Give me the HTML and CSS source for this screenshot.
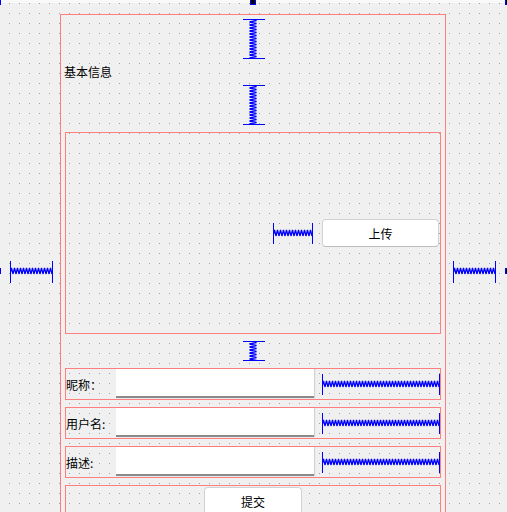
FILE: index.html
```html
<!DOCTYPE html>
<html lang="zh-CN">
<head>
<meta charset="utf-8">
<title>Form</title>
<link rel="stylesheet" href="styles.css">
</head>
<body>
<svg class="defs" width="0" height="0" aria-hidden="true">
  <defs>
    <pattern id="zv" width="22" height="3" patternUnits="userSpaceOnUse">
      <path d="M6.5 0 L13.5 1.5 L6.5 3" fill="none" stroke="#0000ff" stroke-width="1.3"/>
    </pattern>
    <pattern id="zh" width="3" height="22" patternUnits="userSpaceOnUse">
      <path d="M0 13 L1.5 7 L3 13" fill="none" stroke="#0000ff" stroke-width="1.3"/>
    </pattern>
  </defs>
</svg>
<div class="strip"></div>
<div class="root">
  <svg class="spring side" width="43" height="22" viewBox="0 0 43 22">
    <rect x="0" y="0" width="1" height="22" fill="#0000ff"/>
    <rect x="42" y="0" width="1" height="22" fill="#0000ff"/>
    <rect x="1" y="6" width="41" height="8" fill="url(#zh)"/>
  </svg>
  <div class="form">
    <svg class="vspring tall" width="22" height="40" viewBox="0 0 22 40">
      <rect x="0" y="0" width="22" height="1" fill="#0000ff"/>
      <rect x="0" y="39" width="22" height="1" fill="#0000ff"/>
      <rect x="0" y="1" width="22" height="38" fill="url(#zv)"/>
    </svg>
    <div class="title">基本信息</div>
    <svg class="vspring tall" width="22" height="40" viewBox="0 0 22 40">
      <rect x="0" y="0" width="22" height="1" fill="#0000ff"/>
      <rect x="0" y="39" width="22" height="1" fill="#0000ff"/>
      <rect x="0" y="1" width="22" height="38" fill="url(#zv)"/>
    </svg>
    <div class="box upload">
      <svg class="spring" width="40" height="21" viewBox="0 0 40 21">
        <rect x="0" y="0" width="1" height="21" fill="#0000ff"/>
        <rect x="39" y="0" width="1" height="21" fill="#0000ff"/>
        <rect x="1" y="6" width="38" height="8" fill="url(#zh)"/>
      </svg>
      <button class="btn upload-btn" type="button">上传</button>
    </div>
    <svg class="vspring short" width="22" height="20" viewBox="0 0 22 20">
      <rect x="0" y="0" width="22" height="1" fill="#0000ff"/>
      <rect x="0" y="19" width="22" height="1" fill="#0000ff"/>
      <rect x="0" y="1" width="22" height="18" fill="url(#zv)"/>
    </svg>
    <div class="box row">
      <span class="label">昵称：</span>
      <input class="field" type="text">
      <svg class="spring rowspring" width="118" height="21" viewBox="0 0 118 21">
        <rect x="0" y="0" width="1" height="21" fill="#0000ff"/>
        <rect x="117" y="0" width="1" height="21" fill="#0000ff"/>
        <rect x="1" y="6" width="116" height="8" fill="url(#zh)"/>
      </svg>
    </div>
    <div class="box row">
      <span class="label">用户名:</span>
      <input class="field" type="text">
      <svg class="spring rowspring" width="118" height="21" viewBox="0 0 118 21">
        <rect x="0" y="0" width="1" height="21" fill="#0000ff"/>
        <rect x="117" y="0" width="1" height="21" fill="#0000ff"/>
        <rect x="1" y="6" width="116" height="8" fill="url(#zh)"/>
      </svg>
    </div>
    <div class="box row">
      <span class="label">描述:</span>
      <input class="field" type="text">
      <svg class="spring rowspring" width="118" height="21" viewBox="0 0 118 21">
        <rect x="0" y="0" width="1" height="21" fill="#0000ff"/>
        <rect x="117" y="0" width="1" height="21" fill="#0000ff"/>
        <rect x="1" y="6" width="116" height="8" fill="url(#zh)"/>
      </svg>
    </div>
    <div class="box submit">
      <button class="btn submit-btn" type="button">提交</button>
    </div>
  </div>
  <svg class="spring side" width="43" height="22" viewBox="0 0 43 22">
    <rect x="0" y="0" width="1" height="22" fill="#0000ff"/>
    <rect x="42" y="0" width="1" height="22" fill="#0000ff"/>
    <rect x="1" y="6" width="41" height="8" fill="url(#zh)"/>
  </svg>
</div>
<div class="handle h-tl"></div>
<div class="handle h-tc"></div>
<div class="handle h-tr"></div>
<div class="handle h-ml"></div>
<div class="handle h-mr"></div>
</body>
</html>
```
FILE: styles.css
```css
html {
  margin: 0;
  background-color: #f0f0f0;
  background-image:
    linear-gradient(90deg, #f0f0f0 9px, transparent 9px),
    linear-gradient(180deg, transparent 9px, #a0a0a0 9px);
  background-size: 10px 10px;
  background-position: 0 4px;
}

body {
  margin: 0;
  height: 512px;
  overflow: hidden;
  position: relative;
  font-family: "Noto Sans CJK SC", "Noto Sans", sans-serif;
  font-size: 12px;
  color: #000;
}

.defs {
  display: block;
  width: 0;
  height: 0;
}

.strip {
  height: 3px;
  background: #f9f9f9;
}

.root {
  display: flex;
  align-items: center;
  gap: 7px;
  padding-left: 10px;
  height: 537px;
}

.spring {
  display: block;
  flex: none;
}

.form {
  flex: none;
  box-sizing: border-box;
  width: 386px;
  height: 515px;
  border: 1px solid #ff7f7f;
  padding: 4px 4px 0;
  display: flex;
  flex-direction: column;
}

.vspring {
  display: block;
  flex: none;
  align-self: center;
  margin-left: 2px;
}

.title {
  height: 26px;
  line-height: 26px;
  margin-left: -1px;
}

.box {
  flex: none;
  box-sizing: border-box;
  border: 1px solid #ff7f7f;
}

.upload {
  margin-top: 7px;
  height: 202px;
  display: flex;
  align-items: center;
  justify-content: flex-end;
  gap: 9px;
  padding-right: 1px;
}

.btn {
  box-sizing: border-box;
  height: 28px;
  margin: 0;
  padding: 0;
  background: #ffffff;
  border: 1px solid #d2d2d2;
  border-bottom-color: #bcbcbc;
  border-radius: 4px;
  font-family: inherit;
  font-size: 12px;
  color: #000;
}

.upload-btn {
  width: 117px;
}

.short {
  margin-top: 7px;
}

.row {
  margin-top: 7px;
  height: 32px;
  display: flex;
  align-items: flex-start;
}

.label {
  width: 50px;
  height: 30px;
  line-height: 31px;
  flex: none;
  white-space: nowrap;
}

.field {
  box-sizing: border-box;
  width: 198px;
  height: 29px;
  margin: 0;
  padding: 0 4px;
  flex: none;
  background: #ffffff;
  border: none;
  border-bottom: 2px solid #8a8a8a;
  box-shadow: 1px 0 1px rgba(0, 0, 0, 0.12);
  font-family: inherit;
  font-size: 12px;
}

.rowspring {
  margin-top: 5px;
  margin-left: 8px;
}

.submit {
  margin-top: 7px;
  height: 40px;
  display: flex;
  justify-content: center;
  align-items: flex-start;
  padding-top: 1px;
}

.submit-btn {
  width: 98px;
}

.handle {
  position: absolute;
  box-sizing: border-box;
  width: 6px;
  height: 6px;
  background: #000;
  border: 1px solid #0000ff;
}

.h-tl { left: -5px; top: -1px; }
.h-tc { left: 250px; top: -1px; }
.h-tr { left: 505px; top: -1px; }
.h-ml { left: -5px; top: 268px; }
.h-mr { left: 505px; top: 268px; }
```
